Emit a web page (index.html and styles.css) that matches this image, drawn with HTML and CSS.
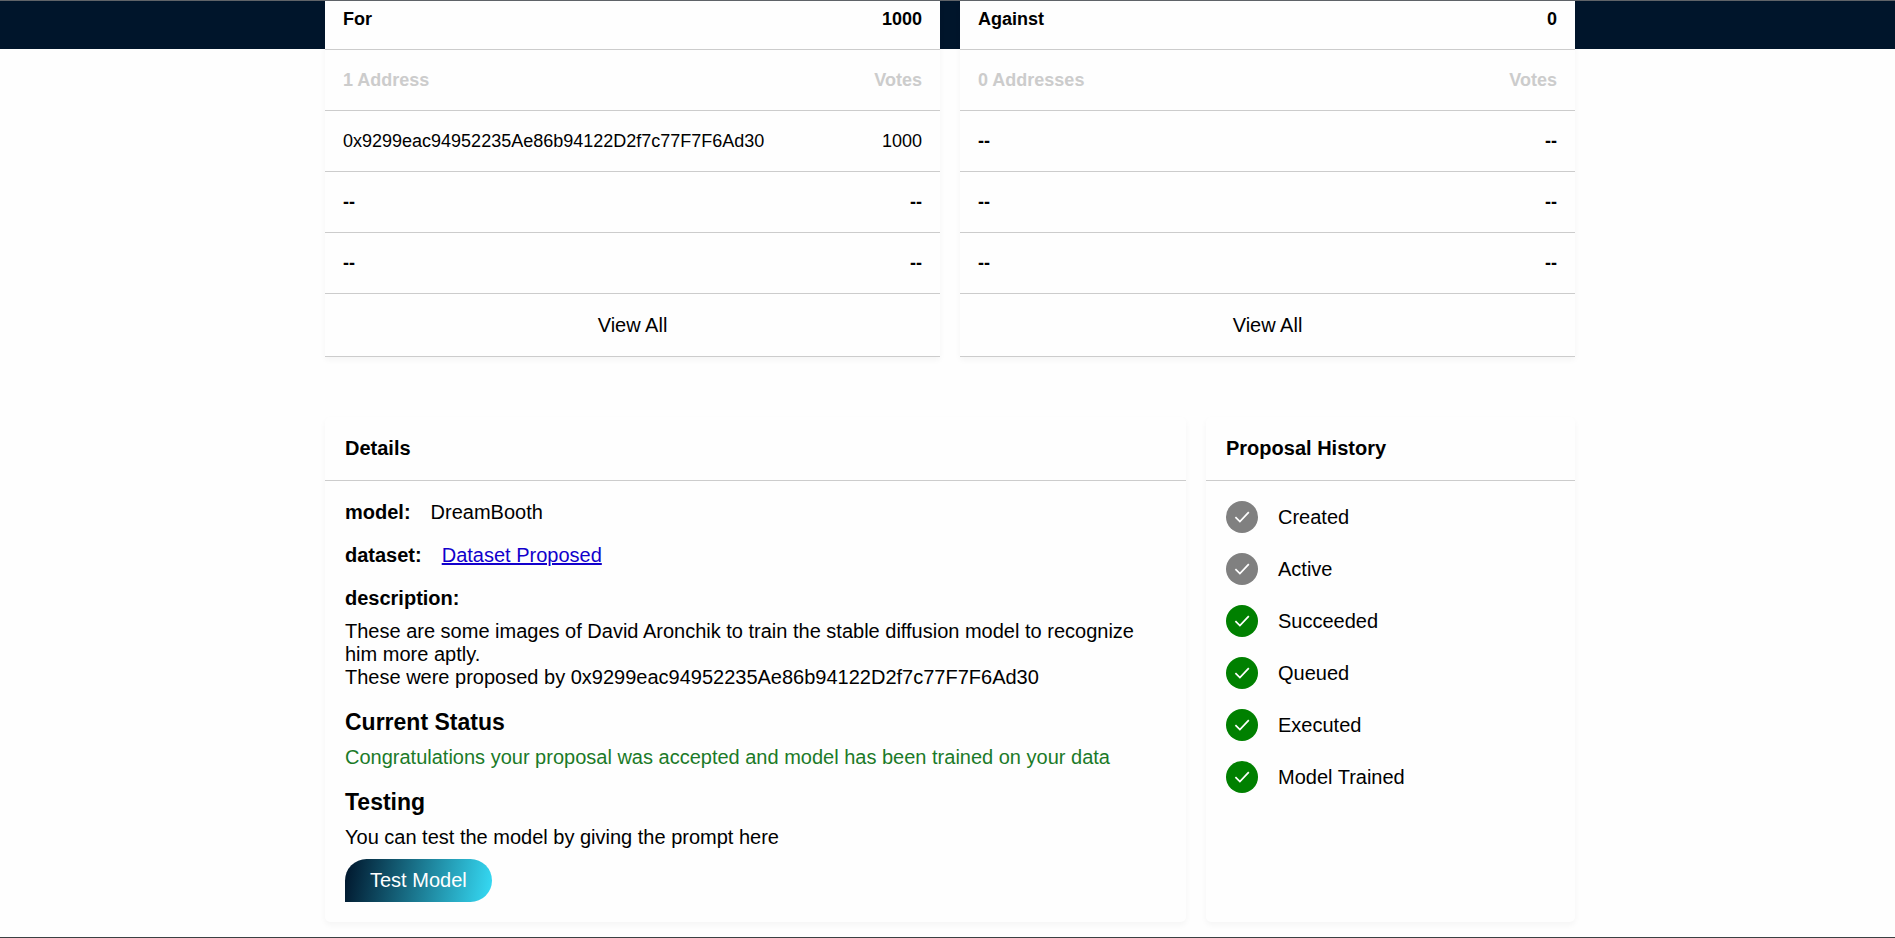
FILE: index.html
```html
<!DOCTYPE html>
<html lang="en">
<head>
<meta charset="utf-8">
<title>Proposal</title>
<meta name="viewport" content="width=device-width, initial-scale=1">
<link rel="stylesheet" href="styles.css">
</head>
<body>
<svg class="sprite" aria-hidden="true">
  <symbol id="check" viewBox="0 0 16 16">
    <path fill="none" stroke="currentColor" stroke-width="1.7" d="M1.4 8.1 5.9 12.6 14.8 3.1"/>
  </symbol>
</svg>
<main class="page">
  <section class="votes">
    <table class="card vote-table">
      <thead>
        <tr class="first"><th>For</th><th>1000</th></tr>
        <tr class="muted"><th>1 Address</th><th>Votes</th></tr>
      </thead>
      <tbody>
        <tr><td>0x9299eac94952235Ae86b94122D2f7c77F7F6Ad30</td><td>1000</td></tr>
        <tr class="empty"><td>--</td><td>--</td></tr>
        <tr class="empty"><td>--</td><td>--</td></tr>
      </tbody>
      <tfoot>
        <tr><td colspan="2"><button type="button" class="view-all">View All</button></td></tr>
      </tfoot>
    </table>
    <table class="card vote-table">
      <thead>
        <tr class="first"><th>Against</th><th>0</th></tr>
        <tr class="muted"><th>0 Addresses</th><th>Votes</th></tr>
      </thead>
      <tbody>
        <tr class="empty"><td>--</td><td>--</td></tr>
        <tr class="empty"><td>--</td><td>--</td></tr>
        <tr class="empty"><td>--</td><td>--</td></tr>
      </tbody>
      <tfoot>
        <tr><td colspan="2"><button type="button" class="view-all">View All</button></td></tr>
      </tfoot>
    </table>
  </section>

  <div class="info">
    <section class="card panel">
      <h2 class="panel-title">Details</h2>
      <div class="panel-body">
        <p class="field"><b>model:</b><span>DreamBooth</span></p>
        <p class="field"><b>dataset:</b><a href="#dataset">Dataset Proposed</a></p>
        <div class="block">
          <b>description:</b>
          <p>These are some images of David Aronchik to train the stable diffusion model to recognize him more aptly.<br>These were proposed by 0x9299eac94952235Ae86b94122D2f7c77F7F6Ad30</p>
        </div>
        <div class="block">
          <h3>Current Status</h3>
          <p class="success">Congratulations your proposal was accepted and model has been trained on your data</p>
        </div>
        <div class="block">
          <h3>Testing</h3>
          <p>You can test the model by giving the prompt here</p>
          <button type="button" class="test-button">Test Model</button>
        </div>
      </div>
    </section>
    <section class="card panel">
      <h2 class="panel-title">Proposal History</h2>
      <ul class="panel-body history">
        <li><span class="dot"><svg><use href="#check"/></svg></span>Created</li>
        <li><span class="dot"><svg><use href="#check"/></svg></span>Active</li>
        <li><span class="dot done"><svg><use href="#check"/></svg></span>Succeeded</li>
        <li><span class="dot done"><svg><use href="#check"/></svg></span>Queued</li>
        <li><span class="dot done"><svg><use href="#check"/></svg></span>Executed</li>
        <li><span class="dot done"><svg><use href="#check"/></svg></span>Model Trained</li>
      </ul>
    </section>
  </div>
</main>
</body>
</html>
```
FILE: styles.css
```css
* {
  box-sizing: border-box;
}

body,
h2,
h3,
p,
ul {
  margin: 0;
  padding: 0;
}

body {
  min-height: 100vh;
  display: flex;
  flex-direction: column;
  border-top: 1px solid #5f6368;
  border-bottom: 1px solid #3c4043;
  background: linear-gradient(#00152b, #00152b) 0 0 / 100% 49px no-repeat #fefefe;
  color: #000;
  font-family: "Liberation Sans", Arial, sans-serif;
  font-size: 20px;
  line-height: 23px;
}

.sprite {
  position: absolute;
  width: 0;
  height: 0;
}

.page {
  width: 100%;
  max-width: 1255px;
  margin: 0 auto;
  padding-left: 5px;
  padding-bottom: 14px;
}

.card {
  background: #fefefe;
  box-shadow: 0 3px 6px rgba(0, 0, 0, 0.04);
}

.votes {
  display: grid;
  grid-template-columns: 1fr 1fr;
  gap: 20px;
  margin-bottom: 60px;
}

.vote-table {
  width: 100%;
  border-collapse: separate;
  border-spacing: 0;
  font-size: 18px;
  line-height: 20px;
}

.vote-table th,
.vote-table td {
  padding: 20px 18px;
  border-bottom: 1px solid #ccc;
  text-align: left;
}

.vote-table th:last-child,
.vote-table td:last-child {
  text-align: right;
}

.vote-table .first th {
  padding-top: 8px;
}

.vote-table .muted th {
  color: #ccc;
}

.vote-table .empty td {
  font-weight: bold;
}

.vote-table tfoot td {
  padding: 0;
}

.view-all {
  display: block;
  width: 100%;
  padding: 20px;
  border: 0;
  background: none;
  color: inherit;
  font: 20px/22px "Liberation Sans", Arial, sans-serif;
}

.info {
  display: grid;
  grid-template-columns: 7fr 3fr;
  gap: 20px;
}

.panel {
  border-radius: 5px;
}

.panel-title {
  padding: 20px;
  border-bottom: 1px solid #ccc;
  font-size: 20px;
  line-height: 23px;
}

.panel-body {
  display: flex;
  flex-direction: column;
  gap: 20px;
  padding: 20px;
}

.field {
  display: flex;
  gap: 20px;
}

.field a {
  color: #1200cc;
}

.block {
  display: flex;
  flex-direction: column;
  align-items: flex-start;
  gap: 10px;
}

.block h3 {
  font-size: 23px;
  line-height: 27px;
}

.success {
  color: #1b7a28;
}

.test-button {
  padding: 10px 25px;
  border: 0;
  border-radius: 22px 22px 22px 0;
  background: linear-gradient(100deg, #00152b, #36dcf6);
  color: #fff;
  font: 20px/23px "Liberation Sans", Arial, sans-serif;
}

.history {
  list-style: none;
}

.history li {
  display: flex;
  align-items: center;
  gap: 20px;
}

.dot {
  display: grid;
  place-items: center;
  width: 32px;
  height: 32px;
  border-radius: 50%;
  background: #808080;
  color: #fff;
}

.dot.done {
  background: #008000;
}

.dot svg {
  width: 16px;
  height: 16px;
}
```
